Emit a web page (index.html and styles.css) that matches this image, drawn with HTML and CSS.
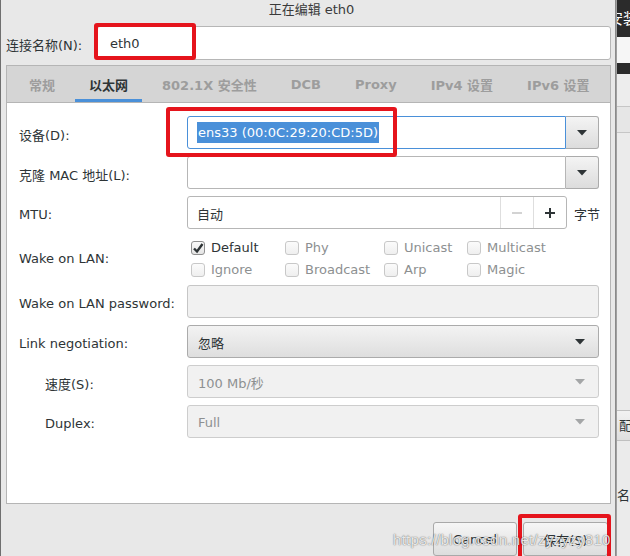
FILE: index.html
```html
<!DOCTYPE html>
<html lang="zh-CN">
<head>
<meta charset="utf-8">
<title>正在编辑 eth0</title>
<link rel="stylesheet" href="styles.css">
</head>
<body>
<div class="screen">
  <div class="dialog">
    <div class="titlebar">正在编辑 eth0</div>
    <div class="name-row">
      <div class="name-label">连接名称(N):</div>
      <div class="entry name-entry">eth0</div>
    </div>
    <div class="notebook">
      <div class="tabs">
        <span class="tab">常规</span>
        <span class="tab active">以太网</span>
        <span class="tab">802.1X 安全性</span>
        <span class="tab">DCB</span>
        <span class="tab">Proxy</span>
        <span class="tab">IPv4 设置</span>
        <span class="tab">IPv6 设置</span>
      </div>
      <div class="page">
        <div class="form">
          <div class="lbl">设备(D):</div>
          <div class="combo">
            <div class="entry combo-entry focus"><span class="sel">ens33 (00:0C:29:20:CD:5D)</span></div>
            <div class="dd-btn"><svg width="10" height="6" viewBox="0 0 10 6"><polygon points="0,0 10,0 5,5.5" fill="#2e3436"/></svg></div>
          </div>

          <div class="lbl">克隆 MAC 地址(L):</div>
          <div class="combo">
            <div class="entry combo-entry"></div>
            <div class="dd-btn"><svg width="10" height="6" viewBox="0 0 10 6"><polygon points="0,0 10,0 5,5.5" fill="#2e3436"/></svg></div>
          </div>

          <div class="lbl">MTU:</div>
          <div class="mtu">
            <div class="spin">
              <div class="spin-text">自动</div>
              <div class="spin-btn"><svg width="12" height="12" viewBox="0 0 12 12"><line x1="1" y1="6" x2="11" y2="6" stroke="#c9c9c9" stroke-width="1.6"/></svg></div>
              <div class="spin-btn"><svg width="12" height="12" viewBox="0 0 12 12"><line x1="1" y1="6" x2="11" y2="6" stroke="#2e3436" stroke-width="2"/><line x1="6" y1="1" x2="6" y2="11" stroke="#2e3436" stroke-width="2"/></svg></div>
            </div>
            <div class="unit">字节</div>
          </div>

          <div class="lbl">Wake on LAN:</div>
          <div class="wol">
            <div class="cb-item on"><span class="cb checked"><svg width="12" height="12" viewBox="0 0 12 12"><path d="M2 6.5 L5 9.5 L10.5 2" fill="none" stroke="#2e3436" stroke-width="2.4"/></svg></span>Default</div>
            <div class="cb-item"><span class="cb"></span>Phy</div>
            <div class="cb-item"><span class="cb"></span>Unicast</div>
            <div class="cb-item"><span class="cb"></span>Multicast</div>
            <div class="cb-item"><span class="cb"></span>Ignore</div>
            <div class="cb-item"><span class="cb"></span>Broadcast</div>
            <div class="cb-item"><span class="cb"></span>Arp</div>
            <div class="cb-item"><span class="cb"></span>Magic</div>
          </div>

          <div class="lbl">Wake on LAN password:</div>
          <div class="entry disabled"></div>

          <div class="lbl">Link negotiation:</div>
          <div class="select">忽略<svg width="10" height="6" viewBox="0 0 10 6"><polygon points="0,0 10,0 5,5.5" fill="#2e3436"/></svg></div>

          <div class="lbl sub">速度(S):</div>
          <div class="select dis">100 Mb/秒<svg width="10" height="6" viewBox="0 0 10 6"><polygon points="0,0 10,0 5,5.5" fill="#a4a6a7"/></svg></div>

          <div class="lbl sub">Duplex:</div>
          <div class="select dis">Full<svg width="10" height="6" viewBox="0 0 10 6"><polygon points="0,0 10,0 5,5.5" fill="#a4a6a7"/></svg></div>
        </div>
      </div>
    </div>
    <div class="actions">
      <button class="btn">Cancel</button>
      <button class="btn">保存(S)</button>
    </div>
  </div>
  <div class="bgwin">
    <div class="bw-top"><span>安装</span></div>
    <div class="bw-white"></div>
    <div class="bw-dark"></div>
    <div class="bw-bar1"></div>
    <div class="bw-bar2"></div>
    <div class="bw-rest">
      <div class="bw-box"><span>配</span></div>
      <div class="bw-char"><span>名</span></div>
    </div>
  </div>
</div>
<div class="mark mark-name"></div>
<div class="mark mark-dev"></div>
<div class="mark mark-save"></div>
<div class="watermark">https://blog.csdn.net/zyzyzy810</div>
</body>
</html>
```
FILE: styles.css
```css
body {
  margin: 0;
  width: 630px;
  height: 556px;
  overflow: hidden;
  position: relative;
  font-family: "DejaVu Sans", "Noto Sans CJK SC", sans-serif;
  font-size: 13px;
  color: #2e3436;
  background: #e8e8e8;
}

.screen {
  display: flex;
  height: 556px;
}

.dialog {
  width: 616px;
  flex: none;
  box-sizing: border-box;
  border-left: 1px solid #6f6f6f;
  border-right: 1px solid #8a8a8a;
  padding: 0 4px 0 5px;
  background: #e8e8e8;
  display: flex;
  flex-direction: column;
}

.titlebar {
  height: 22px;
  line-height: 19px;
  text-align: center;
  color: #3a3a3a;
  padding-left: 6px;
}

.name-row {
  display: flex;
  align-items: center;
  margin-top: 7px;
}

.name-label {
  width: 91px;
  padding-top: 2px;
}

.entry {
  box-sizing: border-box;
  height: 33px;
  border: 1px solid #b6b6b6;
  border-radius: 3px;
  background: #fff;
  padding: 0 9px;
  display: flex;
  align-items: center;
}

.name-entry {
  flex: 1;
  height: 34px;
  padding-left: 12px;
}

.notebook {
  margin-top: 5px;
  display: flex;
  flex-direction: column;
}

.tabs {
  height: 38px;
  box-sizing: border-box;
  border: 1px solid #b5b5b5;
  background: #d5d5d5;
  display: flex;
  gap: 6px;
  padding-left: 8px;
}

.tab {
  padding: 1px 14px 0;
  display: flex;
  align-items: center;
  font-weight: bold;
  color: #9d9d9d;
  border-top: 3px solid transparent;
  border-bottom: 3px solid transparent;
}

.tab.active {
  color: #2e3436;
  border-bottom-color: #4a90d9;
}

.page {
  height: 401px;
  box-sizing: border-box;
  background: #fff;
  border: 1px solid #b5b5b5;
  border-top: none;
  padding: 13px 11px 0 12px;
}

.form {
  display: grid;
  grid-template-columns: 168px 1fr;
  row-gap: 7px;
  align-items: center;
}

.lbl {
  padding-top: 3px;
}

.lbl.sub {
  padding-left: 26px;
}

.combo {
  display: flex;
  height: 33px;
}

.combo-entry {
  flex: 1;
  border-radius: 3px 0 0 3px;
}

.combo-entry.focus {
  border-color: #4a90d9;
}

.sel {
  background: #4a90d9;
  color: #fff;
  line-height: 21px;
  padding: 0 1px;
}

.dd-btn {
  width: 33px;
  box-sizing: border-box;
  border: 1px solid #ababab;
  border-left: none;
  border-radius: 0 3px 3px 0;
  background: linear-gradient(#f4f4f4, #dcdcdc);
  display: flex;
  align-items: center;
  justify-content: center;
}

.mtu {
  display: flex;
  align-items: center;
}

.spin {
  flex: 1;
  display: flex;
  height: 33px;
  box-sizing: border-box;
  border: 1px solid #b6b6b6;
  border-radius: 3px;
  background: #fff;
}

.spin-text {
  flex: 1;
  display: flex;
  align-items: center;
  padding: 1px 0 0 9px;
}

.spin-btn {
  width: 32px;
  border-left: 1px solid #dedede;
  display: flex;
  align-items: center;
  justify-content: center;
}

.unit {
  width: 25px;
  margin-left: 7px;
  padding-top: 1px;
  white-space: nowrap;
}

.wol {
  display: grid;
  grid-template-columns: 94px 99px 83px auto;
  grid-auto-rows: 15px;
  row-gap: 7px;
  padding: 4px 0 0 4px;
  height: 42px;
  box-sizing: border-box;
}

.cb-item {
  display: flex;
  align-items: center;
  gap: 6px;
  color: #8d9091;
  height: 15px;
  line-height: 15px;
}

.cb-item.on {
  color: #2e3436;
}

.cb {
  width: 14px;
  height: 14px;
  flex: none;
  box-sizing: border-box;
  border: 1px solid #c8c8c8;
  border-radius: 3px;
  background: linear-gradient(#fbfbfb, #efefef);
  display: flex;
  align-items: center;
  justify-content: center;
}

.cb.checked {
  border-color: #8f8f8f;
  background: linear-gradient(#fafafa, #e4e4e4);
}

.entry.disabled {
  background: #f1f1f1;
  border-color: #c6c6c6;
}

.select {
  height: 33px;
  box-sizing: border-box;
  border: 1px solid #ababab;
  border-radius: 3px;
  background: linear-gradient(#f3f3f3, #dedede);
  display: flex;
  align-items: center;
  justify-content: space-between;
  padding: 1px 13px 0 10px;
}

.select.dis {
  background: #f1f1f1;
  border-color: #cdcdcd;
  color: #8d9091;
}

.actions {
  flex: 1;
  display: flex;
  justify-content: flex-end;
  align-items: flex-start;
  gap: 6px;
  padding: 18px 3px 0 0;
}

.btn {
  width: 84px;
  height: 34px;
  box-sizing: border-box;
  border: 1px solid #a9a9a9;
  border-radius: 3px;
  background: linear-gradient(#f6f6f6, #dddddd);
  font: inherit;
  color: #2e3436;
  padding: 0;
}

.btn + .btn {
  width: 85px;
}

.bgwin {
  flex: 1;
  display: flex;
  flex-direction: column;
  overflow: hidden;
  background: #ececec;
  border-left: 1px solid #a0a0a0;
}

.bw-top {
  height: 37px;
  background: #2b2b2b;
  color: #fff;
  font-size: 15px;
  line-height: 38px;
  white-space: nowrap;
  text-indent: -9px;
}

.bw-white {
  height: 26px;
  background: #f6f6f6;
}

.bw-dark {
  height: 11px;
  background: #2b2b2b;
}

.bw-bar1 {
  height: 32px;
  background: #ededed;
  border-bottom: 1px solid #c6c6c6;
}

.bw-bar2 {
  height: 25px;
  background: #e6e6e6;
  border-bottom: 1px solid #c6c6c6;
}

.bw-rest {
  flex: 1;
  padding-top: 277px;
  background: #ebebeb;
}

.bw-box {
  height: 31px;
  box-sizing: border-box;
  border-top: 1px solid #c0c0c0;
  border-bottom: 1px solid #c0c0c0;
  background: linear-gradient(#f2f2f2, #dedede);
  line-height: 30px;
  font-size: 13px;
  padding-left: 2px;
  white-space: nowrap;
}

.bw-char {
  margin-top: 44px;
  font-size: 13px;
  white-space: nowrap;
}

.mark {
  position: absolute;
  border: 4px solid #e5141c;
  border-radius: 3px;
  box-sizing: border-box;
}

.mark-name {
  left: 94px;
  top: 23px;
  width: 102px;
  height: 37px;
}

.mark-dev {
  left: 166px;
  top: 107px;
  width: 231px;
  height: 50px;
}

.mark-save {
  left: 518px;
  top: 514px;
  width: 93px;
  height: 50px;
}

.watermark {
  position: absolute;
  left: 393px;
  top: 531px;
  font-family: "Liberation Sans", sans-serif;
  font-size: 15px;
  letter-spacing: 0.3px;
  color: rgba(255, 255, 255, 0.85);
  text-shadow: 0 0 1px rgba(0, 0, 0, 0.55), 0 0 2px rgba(0, 0, 0, 0.25);
  white-space: nowrap;
}
```
